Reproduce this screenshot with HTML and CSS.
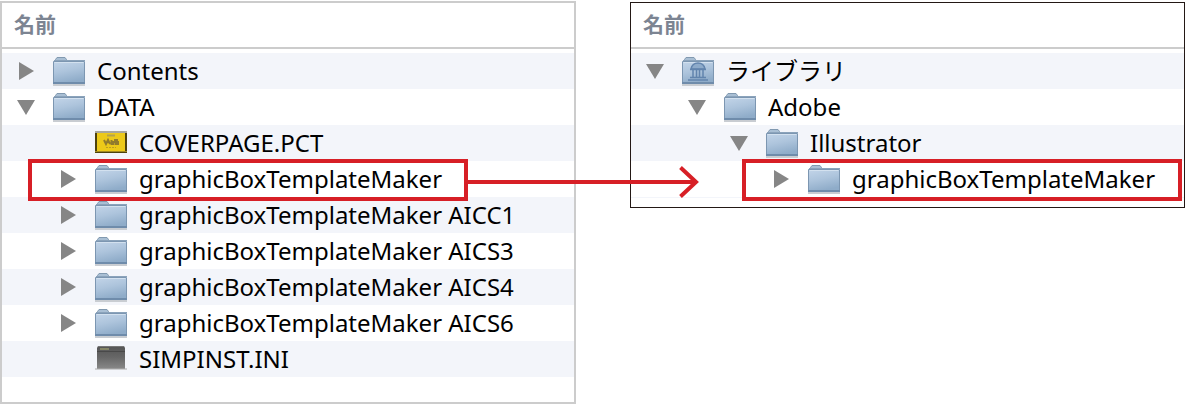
FILE: index.html
```
<!DOCTYPE html>
<html lang="ja">
<head>
    <meta charset="UTF-8">
    <meta name="viewport" content="width=device-width, initial-scale=1.0">
    <title>graphicBoxTemplateMaker</title>
    <link rel="stylesheet" href="styles.css">
</head>
<body>
    <!-- shared icons -->
    <svg class="defs" width="0" height="0" aria-hidden="true">
        <defs>
            <linearGradient id="folder-fill" x1="0" y1="0" x2="0.3" y2="1">
                <stop offset="0" stop-color="#c3d5e9"/>
                <stop offset="0.5" stop-color="#adc4dc"/>
                <stop offset="1" stop-color="#8facc9"/>
            </linearGradient>
            <linearGradient id="exec-fill" x1="0" y1="0" x2="0" y2="1">
                <stop offset="0" stop-color="#555"/>
                <stop offset="0.5" stop-color="#666"/>
                <stop offset="1" stop-color="#868686"/>
            </linearGradient>
            <symbol id="folder" viewBox="0 -1 32 32">
                <rect x="0" y="28" width="32" height="2" fill="#c9cdd2"/>
                <path d="M2.5 6V3.5L4 1.5h8l1.5 2V6" fill="#a9bfd4" stroke="#8199b0"/>
                <path d="M0.5 5.5h31v22h-31z" fill="url(#folder-fill)" stroke="#7c96b1"/>
                <path d="M1 4.5h31" stroke="#8ba3bb"/>
                <path d="M1.5 6.5h29" stroke="#d3e1ef"/>
                <path d="M0 27h32" stroke="#6f8cab" stroke-width="2"/>
            </symbol>
            <symbol id="library" viewBox="0 0 32 32">
                <use href="#folder"/>
                <path d="M9 14c1-5 4-6 7-6s6 1 7 6z" fill="#8eabca" stroke="#6284ad" stroke-width="1.5"/>
                <path d="M8 14.5h16M8 22.5h16M6 25h20" stroke="#6284ad" stroke-width="1.5"/>
                <path d="M11 15v8M14.5 15v8M17.5 15v8M21 15v8" stroke="#6284ad" stroke-width="1.5"/>
            </symbol>
            <symbol id="picture" viewBox="0 -1 32 32">
                <rect x="0" y="3" width="32" height="22" fill="#4d420e"/>
                <rect x="0" y="3" width="32" height="2" fill="#a8a79d"/>
                <rect x="2" y="5" width="28" height="18" fill="#ecc919"/>
                <path d="M12 7.5h8" stroke="#b4a24c" stroke-width="2"/>
                <path d="M9 12l2 4 2-4 2 4M16.500 12v4h3M16.500 14h3M23 12h-3v2h3v2h-3" fill="none" stroke="#917b2c" stroke-width="2"/>
                <path d="M11 19.5h10" stroke="#bd9d20" stroke-dasharray="2 1"/>
                <path d="M0 23.5h32" stroke="#a28b22"/>
            </symbol>
            <symbol id="exec" viewBox="0 0 32 32">
                <path d="M0 25h32v2H0z" fill="#cfd0d2"/>
                <path d="M3 3h26l1 2v20H2V5z" fill="url(#exec-fill)"/>
                <path d="M3 3.5h26" stroke="#777"/>
                <path d="M2 8.5h28" stroke="#494949"/>
                <path d="M5 6h9" stroke="#858567" stroke-width="2"/>
                <path d="M2 25.5h28" stroke="#9b9b9b"/>
            </symbol>
        </defs>
    </svg>

    <main class="container">
        <section class="panel panel-source">
            <h2 class="panel-header">名前</h2>
            <ul class="rows">
                <li class="row">
                    <button class="toggle" type="button" aria-label="Contents"></button>
                    <svg class="icon"><use href="#folder"/></svg>
                    <span class="name">Contents</span>
                </li>
                <li class="row">
                    <button class="toggle open" type="button" aria-label="DATA"></button>
                    <svg class="icon"><use href="#folder"/></svg>
                    <span class="name">DATA</span>
                </li>
                <li class="row level-1">
                    <span class="toggle-space"></span>
                    <svg class="icon"><use href="#picture"/></svg>
                    <span class="name">COVERPAGE.PCT</span>
                </li>
                <li class="row level-1">
                    <button class="toggle" type="button" aria-label="graphicBoxTemplateMaker"></button>
                    <svg class="icon"><use href="#folder"/></svg>
                    <span class="name">graphicBoxTemplateMaker</span>
                    <span class="marker"></span>
                    <span class="arrow">
                        <svg class="arrow-head" viewBox="0 0 20 32"><path d="M1.5 1.5L17 16L1.5 30.5"/></svg>
                    </span>
                </li>
                <li class="row level-1">
                    <button class="toggle" type="button" aria-label="graphicBoxTemplateMaker AICC1"></button>
                    <svg class="icon"><use href="#folder"/></svg>
                    <span class="name">graphicBoxTemplateMaker AICC1</span>
                </li>
                <li class="row level-1">
                    <button class="toggle" type="button" aria-label="graphicBoxTemplateMaker AICS3"></button>
                    <svg class="icon"><use href="#folder"/></svg>
                    <span class="name">graphicBoxTemplateMaker AICS3</span>
                </li>
                <li class="row level-1">
                    <button class="toggle" type="button" aria-label="graphicBoxTemplateMaker AICS4"></button>
                    <svg class="icon"><use href="#folder"/></svg>
                    <span class="name">graphicBoxTemplateMaker AICS4</span>
                </li>
                <li class="row level-1">
                    <button class="toggle" type="button" aria-label="graphicBoxTemplateMaker AICS6"></button>
                    <svg class="icon"><use href="#folder"/></svg>
                    <span class="name">graphicBoxTemplateMaker AICS6</span>
                </li>
                <li class="row level-1">
                    <span class="toggle-space"></span>
                    <svg class="icon"><use href="#exec"/></svg>
                    <span class="name">SIMPINST.INI</span>
                </li>
            </ul>
        </section>

        <section class="panel panel-target">
            <h2 class="panel-header">名前</h2>
            <ul class="rows">
                <li class="row">
                    <button class="toggle open" type="button" aria-label="ライブラリ"></button>
                    <svg class="icon"><use href="#library"/></svg>
                    <span class="name">ライブラリ</span>
                </li>
                <li class="row level-1">
                    <button class="toggle open" type="button" aria-label="Adobe"></button>
                    <svg class="icon"><use href="#folder"/></svg>
                    <span class="name">Adobe</span>
                </li>
                <li class="row level-2">
                    <button class="toggle open" type="button" aria-label="Illustrator"></button>
                    <svg class="icon"><use href="#folder"/></svg>
                    <span class="name">Illustrator</span>
                </li>
                <li class="row level-3">
                    <button class="toggle" type="button" aria-label="graphicBoxTemplateMaker"></button>
                    <svg class="icon"><use href="#folder"/></svg>
                    <span class="name">graphicBoxTemplateMaker</span>
                    <span class="marker"></span>
                </li>
            </ul>
        </section>
    </main>
</body>
</html>
```
FILE: styles.css
```
* {
    box-sizing: border-box;
}
body {
    margin: 0;
    background: #fff;
    color: #000;
    font-family: "Noto Sans", "Noto Sans CJK JP", sans-serif;
}
.defs {
    position: absolute;
}
.container {
    display: grid;
    grid-template-columns: 576fr 555fr;
    gap: 54px;
    align-items: start;
    padding: 1px 1px 0 0;
}
.panel {
    background: #fff;
}
.panel-source {
    border: 2px solid #ccc;
    padding-bottom: 25px;
}
.panel-target {
    margin-top: 1px;
    border: 1px solid #231815;
    padding-bottom: 9px;
}
.panel-header {
    height: 46px;
    margin: 0 0 4px;
    padding: 0 12px;
    border-bottom: 2px solid #ccc;
    color: #7c8492;
    font-family: "Noto Sans CJK JP", sans-serif;
    font-size: 21px;
    font-weight: 700;
    line-height: 40px;
}
.rows {
    margin: 0;
    padding: 0;
    list-style: none;
}
.panel-target .rows {
    border-bottom: 1px solid #f3f5fa;
}
.row {
    position: relative;
    display: flex;
    align-items: center;
    height: 36px;
    padding-left: 15px;
}
.row:nth-child(odd) {
    background: #f3f5fa;
}
.level-1 {
    padding-left: 57px;
}
.level-2 {
    padding-left: 99px;
}
.level-3 {
    padding-left: 141px;
}
.toggle,
.toggle-space {
    flex: none;
    width: 18px;
    height: 18px;
    margin-right: 18px;
}
.toggle {
    padding: 0;
    border: none;
    background: #868686;
    clip-path: polygon(2px 0, 17px 9px, 2px 18px);
    cursor: pointer;
}
.toggle.open {
    clip-path: polygon(0 2px, 18px 2px, 9px 17px);
}
.icon {
    flex: none;
    width: 32px;
    height: 32px;
    margin-right: 12px;
}
.name {
    font-size: 24px;
    line-height: 36px;
    white-space: nowrap;
}

/* red frame and the arrow to the other window */
.marker {
    position: absolute;
    z-index: 1;
    top: -2px;
    left: 26px;
    width: 440px;
    height: 42px;
    border: 4px solid #d71f26;
    pointer-events: none;
}
.panel-target .marker {
    left: auto;
    right: 2px;
}
.arrow {
    position: absolute;
    z-index: 1;
    top: 19px;
    left: 466px;
    right: -122px;
    height: 4px;
    background: #d71f26;
}
.arrow-head {
    position: absolute;
    top: -14px;
    right: -3px;
    width: 20px;
    height: 32px;
    fill: none;
    stroke: #d71f26;
    stroke-width: 4;
}
```
